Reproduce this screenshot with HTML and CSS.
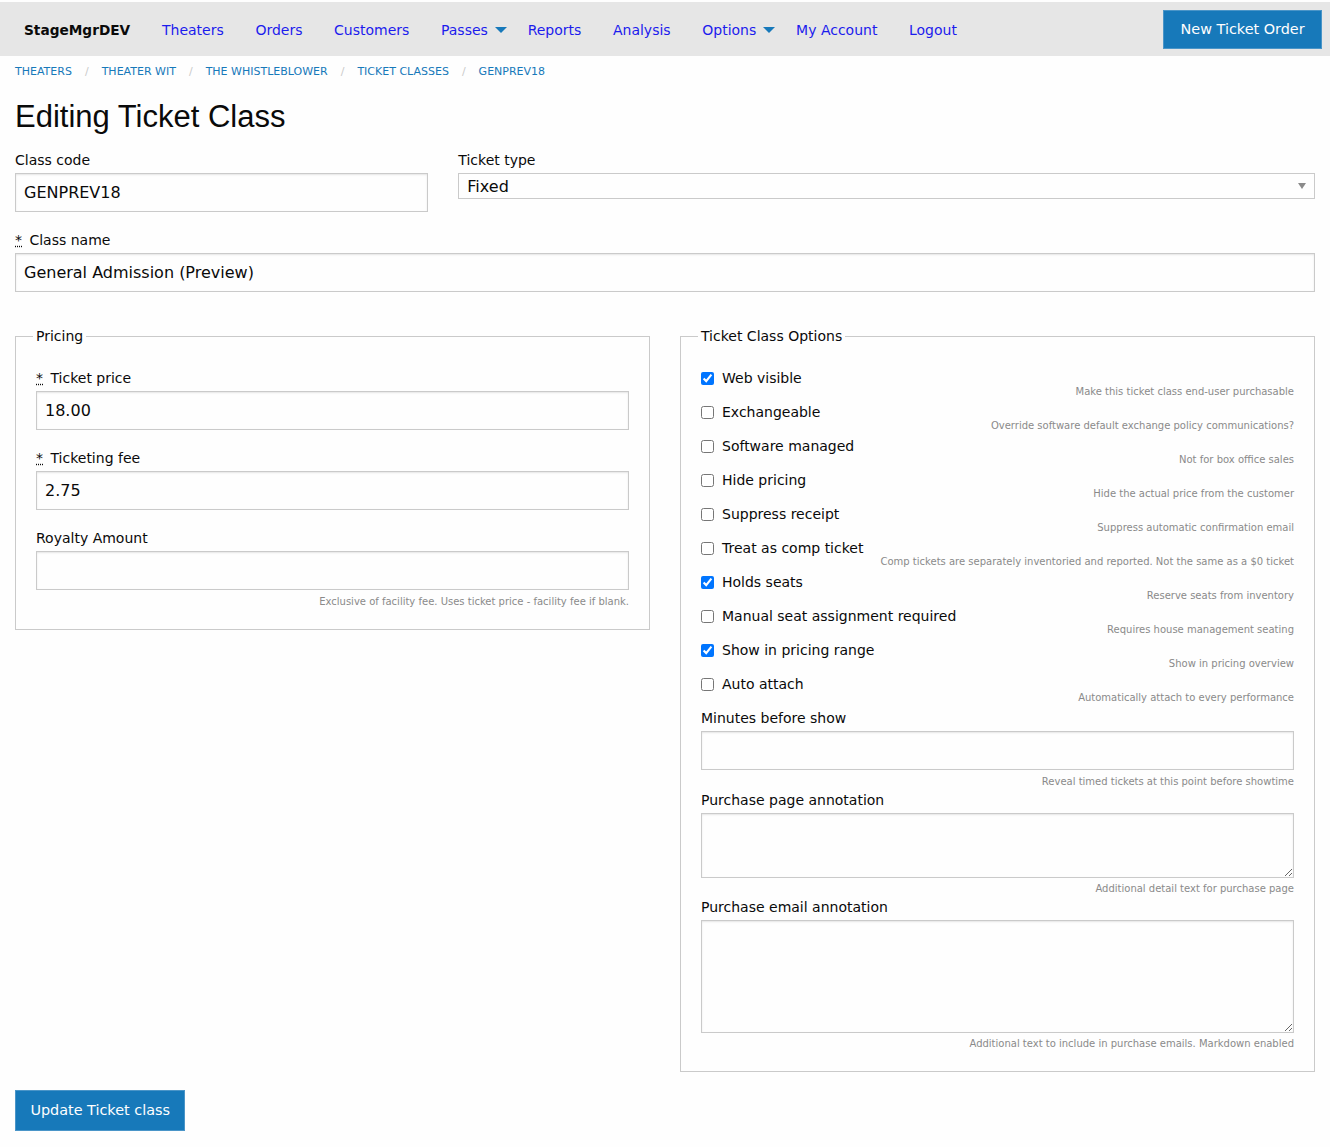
FILE: index.html
```html
<!DOCTYPE html>
<html lang="en">
<head>
    <meta charset="UTF-8">
    <meta name="viewport" content="width=device-width, initial-scale=1.0">
    <title>Editing Ticket Class</title>
    <link rel="stylesheet" href="styles.css">
</head>
<body>
    <nav class="top-bar">
        <div class="menu">
            <span class="brand">StageMgrDEV</span>
            <a href="#">Theaters</a>
            <a href="#">Orders</a>
            <a href="#">Customers</a>
            <a href="#" class="has-dropdown">Passes</a>
            <a href="#">Reports</a>
            <a href="#">Analysis</a>
            <a href="#" class="has-dropdown">Options</a>
            <a href="#">My Account</a>
            <a href="#">Logout</a>
        </div>
        <a href="#" class="button nav-button">New Ticket Order</a>
    </nav>

    <div class="cell">
        <ul class="breadcrumbs">
            <li><a href="#">Theaters</a></li>
            <li><a href="#">Theater Wit</a></li>
            <li><a href="#">The Whistleblower</a></li>
            <li><a href="#">Ticket Classes</a></li>
            <li><a href="#">GENPREV18</a></li>
        </ul>
        <h1>Editing Ticket Class</h1>
    </div>

    <form>
        <div class="grid one-two">
            <div class="cell">
                <label for="code">Class code</label>
                <input class="input" type="text" id="code" value="GENPREV18">
            </div>
            <div class="cell">
                <label for="type">Ticket type</label>
                <div class="select-wrap">
                    <select id="type">
                        <option selected>Fixed</option>
                        <option>Variable</option>
                    </select>
                </div>
            </div>
        </div>

        <div class="cell">
            <label for="name"><abbr title="required">*</abbr> Class name</label>
            <input class="input" type="text" id="name" value="General Admission (Preview)">
        </div>

        <div class="grid halves">
            <div class="cell">
                <fieldset class="fieldset">
                    <legend>Pricing</legend>
                    <label for="price"><abbr title="required">*</abbr> Ticket price</label>
                    <input class="input" type="text" id="price" value="18.00">
                    <label for="fee"><abbr title="required">*</abbr> Ticketing fee</label>
                    <input class="input" type="text" id="fee" value="2.75">
                    <label for="royalty">Royalty Amount</label>
                    <input class="input has-help" type="text" id="royalty">
                    <p class="help-text">Exclusive of facility fee. Uses ticket price - facility fee if blank.</p>
                </fieldset>
            </div>
            <div class="cell">
                <fieldset class="fieldset">
                    <legend>Ticket Class Options</legend>

                    <div class="check-row">
                        <label><input type="checkbox" checked> Web visible</label>
                        <p class="help-text check-help">Make this ticket class end-user purchasable</p>
                    </div>
                    <div class="check-row">
                        <label><input type="checkbox"> Exchangeable</label>
                        <p class="help-text check-help">Override software default exchange policy communications?</p>
                    </div>
                    <div class="check-row">
                        <label><input type="checkbox"> Software managed</label>
                        <p class="help-text check-help">Not for box office sales</p>
                    </div>
                    <div class="check-row">
                        <label><input type="checkbox"> Hide pricing</label>
                        <p class="help-text check-help">Hide the actual price from the customer</p>
                    </div>
                    <div class="check-row">
                        <label><input type="checkbox"> Suppress receipt</label>
                        <p class="help-text check-help">Suppress automatic confirmation email</p>
                    </div>
                    <div class="check-row">
                        <label><input type="checkbox"> Treat as comp ticket</label>
                        <p class="help-text check-help">Comp tickets are separately inventoried and reported. Not the same as a $0 ticket</p>
                    </div>
                    <div class="check-row">
                        <label><input type="checkbox" checked> Holds seats</label>
                        <p class="help-text check-help">Reserve seats from inventory</p>
                    </div>
                    <div class="check-row">
                        <label><input type="checkbox"> Manual seat assignment required</label>
                        <p class="help-text check-help">Requires house management seating</p>
                    </div>
                    <div class="check-row">
                        <label><input type="checkbox" checked> Show in pricing range</label>
                        <p class="help-text check-help">Show in pricing overview</p>
                    </div>
                    <div class="check-row">
                        <label><input type="checkbox"> Auto attach</label>
                        <p class="help-text check-help">Automatically attach to every performance</p>
                    </div>

                    <label for="minutes">Minutes before show</label>
                    <input class="input has-help" type="text" id="minutes">
                    <p class="help-text">Reveal timed tickets at this point before showtime</p>

                    <label for="page-note">Purchase page annotation</label>
                    <textarea class="input textarea short" id="page-note"></textarea>
                    <p class="help-text">Additional detail text for purchase page</p>

                    <label for="email-note">Purchase email annotation</label>
                    <textarea class="input textarea tall" id="email-note"></textarea>
                    <p class="help-text">Additional text to include in purchase emails. Markdown enabled</p>
                </fieldset>
            </div>
        </div>

        <div class="cell">
            <button type="submit" class="button">Update Ticket class</button>
        </div>
    </form>
</body>
</html>
```

FILE: styles.css
```css
* {
    box-sizing: border-box;
}

body {
    margin: 0;
    font-family: "DejaVu Sans", Verdana, sans-serif;
    font-size: 14px;
    color: #0a0a0a;
    background: #fefefe;
}

/* top bar */

.top-bar {
    margin-top: 2px;
    height: 54px;
    padding: 8px;
    background: #e6e6e6;
    display: flex;
    align-items: center;
    justify-content: space-between;
}

.menu {
    display: flex;
    align-items: center;
    padding-top: 2px;
}

.brand {
    font-weight: bold;
    font-size: 13.7px;
    padding: 0 16px;
    color: #0a0a0a;
}

.menu a {
    color: #1c1ced;
    text-decoration: none;
    padding: 0 15.8px;
    line-height: 20px;
}

.menu a.has-dropdown {
    display: flex;
    align-items: center;
    padding-right: 5px;
}

.menu a.has-dropdown::after {
    content: "";
    width: 0;
    height: 0;
    margin-left: 7px;
    border: 6px solid transparent;
    border-bottom-width: 0;
    border-top-color: #1779ba;
}

.button {
    display: inline-block;
    background: #1779ba;
    color: #fefefe;
    font-family: "DejaVu Sans", Verdana, sans-serif;
    font-size: 14.4px;
    line-height: 1;
    padding: 12.2px 14.4px;
    border: 1px solid #4a95c8;
    text-decoration: none;
    cursor: pointer;
}

.nav-button {
    padding: 11.3px 16.4px;
}

/* layout */

.cell {
    padding: 0 15px;
}

.grid {
    display: grid;
    align-items: start;
}

.one-two {
    grid-template-columns: 1fr 2fr;
}

.halves {
    grid-template-columns: 1fr 1fr;
}

/* breadcrumbs */

.breadcrumbs {
    list-style: none;
    margin: 8px 0 15px;
    padding: 0;
    display: flex;
    font-size: 11px;
    line-height: 16px;
    text-transform: uppercase;
}

.breadcrumbs li:not(:last-child)::after {
    content: "/";
    color: #cacaca;
    margin: 0 13px;
}

.breadcrumbs a {
    color: #1779ba;
    text-decoration: none;
}

h1 {
    font-family: "Liberation Sans", Arial, sans-serif;
    font-size: 31px;
    font-weight: normal;
    line-height: 43px;
    margin: 0 0 10px;
}

/* forms */

label {
    display: block;
    line-height: 25px;
    color: #0a0a0a;
}

abbr[title] {
    text-decoration: underline dotted;
    margin-right: 3px;
}

.input {
    display: block;
    width: 100%;
    height: 39px;
    margin: 0 0 16px;
    padding: 8px;
    border: 1px solid #cacaca;
    border-radius: 0;
    box-shadow: inset 0 1px 2px rgba(10, 10, 10, 0.1);
    background: #fefefe;
    font-family: "DejaVu Sans", Verdana, sans-serif;
    font-size: 16px;
    color: #0a0a0a;
}

.input.has-help {
    margin-bottom: 6px;
}

.textarea {
    margin-bottom: 5px;
    resize: vertical;
}

.textarea.short {
    height: 65px;
}

.textarea.tall {
    height: 113px;
}

.select-wrap {
    position: relative;
}

.select-wrap select {
    display: block;
    width: 100%;
    height: 26px;
    padding: 0 8px;
    border: 1px solid #cacaca;
    border-radius: 0;
    background: #fefefe;
    font-family: "DejaVu Sans", Verdana, sans-serif;
    font-size: 16px;
    color: #0a0a0a;
    appearance: none;
    -webkit-appearance: none;
}

.select-wrap::after {
    content: "";
    position: absolute;
    right: 9px;
    top: 10px;
    border: 4px solid transparent;
    border-bottom-width: 0;
    border-top: 6px solid #8a8a8a;
}

.fieldset {
    border: 1px solid #cacaca;
    padding: 20px 20px 21px;
    margin: 18px 0;
    min-width: 0;
}

.fieldset legend {
    padding: 0 3px;
    margin-left: -3px;
    line-height: 20px;
    font-size: 14px;
}

.help-text {
    margin: 0;
    font-size: 10px;
    line-height: 12px;
    color: #8a8a8a;
    text-align: right;
}

.check-row label {
    display: flex;
    align-items: center;
}

.check-row input[type="checkbox"] {
    width: 13px;
    height: 13px;
    margin: 0 8px 0 0;
}

.check-help {
    margin: -5px 0 2px;
}
```
